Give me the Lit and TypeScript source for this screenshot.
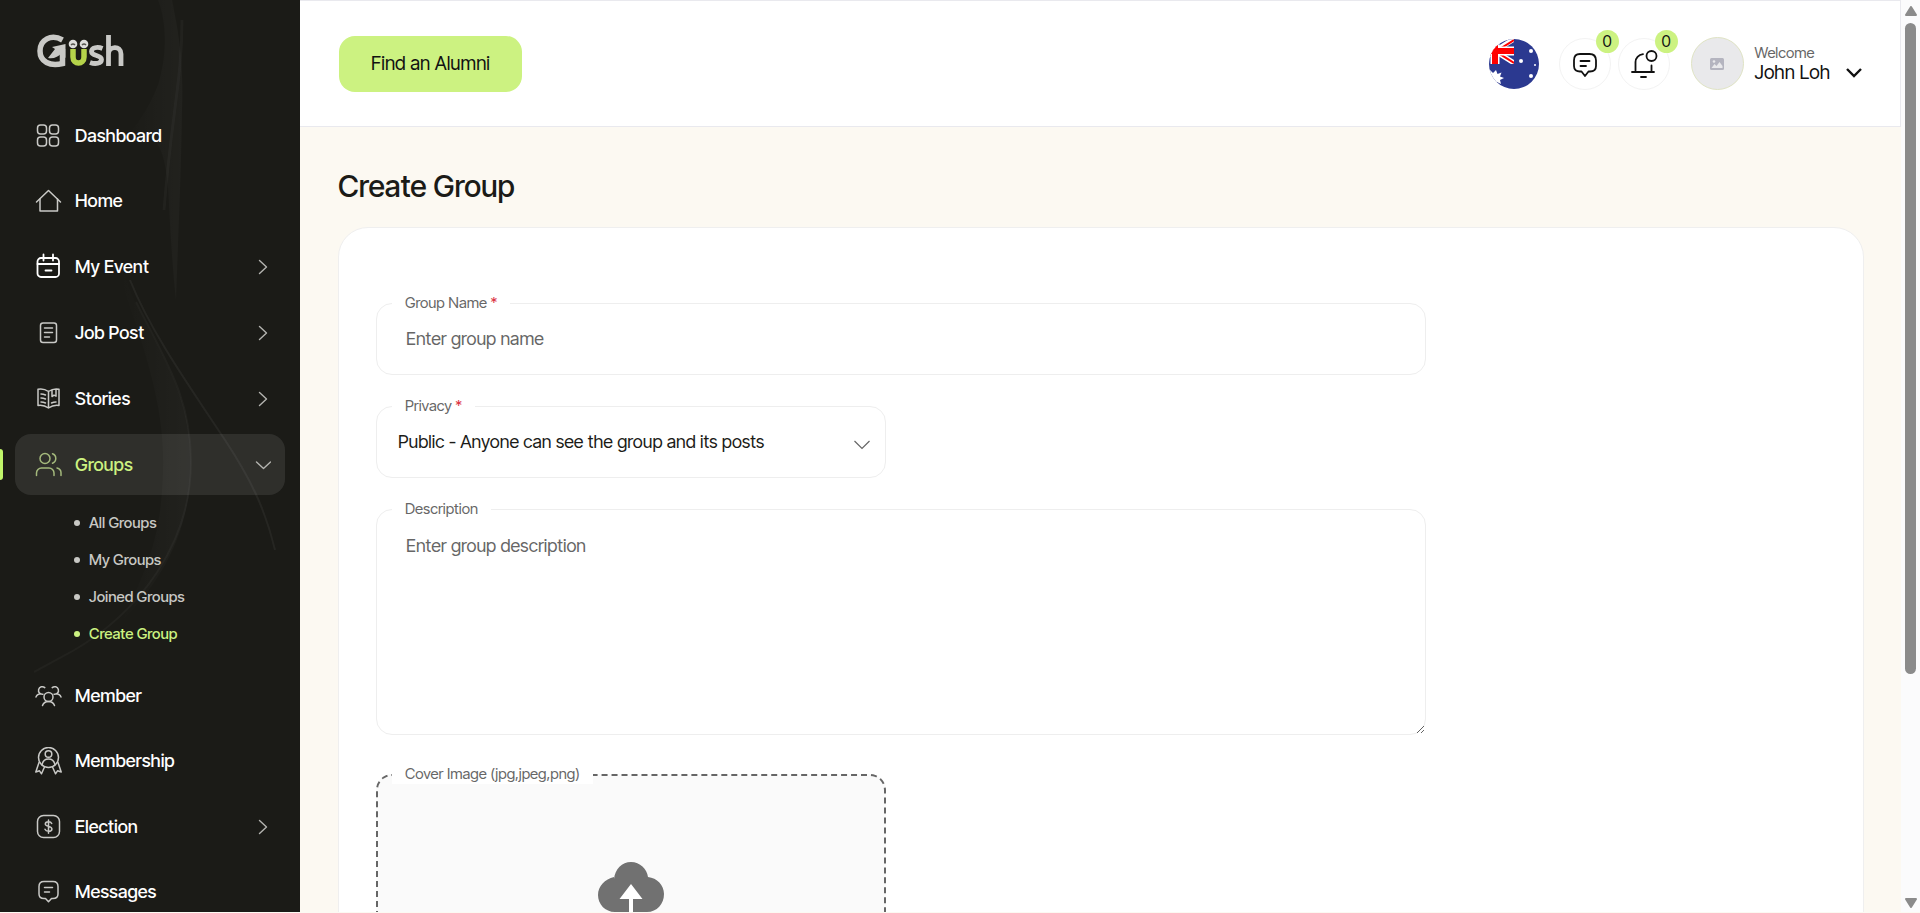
import { LitElement, html, css, svg } from "lit";
import { customElement } from "lit/decorators.js";

const rail = {
  dashboard: svg`<rect x="2.5" y="3" width="9" height="9" rx="3"/><rect x="14.5" y="3" width="9" height="9" rx="3"/><rect x="2.5" y="15" width="9" height="9" rx="3"/><rect x="14.5" y="15" width="9" height="9" rx="3"/>`,
  home: svg`<path d="M1.500 15 13.500 3.500 25.500 15"/><path d="M5 12v12h17.500V12"/>`,
  event: svg`<rect x="2.500" y="5" width="21.500" height="19" rx="3.500" stroke-width="1.800"/><path stroke-width="1.800" d="M2.500 11h21.500M8.500 1.500v6M18 1.500v6M10.500 17.500h6"/>`,
  job: svg`<rect x="5.500" y="4" width="16" height="19.500" rx="2.500"/><path d="M9.500 9h8M9.500 13.500h8M9.500 18h5"/>`,
  book: svg`<path d="M13.500 6.500C10 4 6.500 3.500 3 4.200v16.300c3.500-.5 7 0 10.500 2.500 3.500-2.500 7-3 10.500-2.500V4.200c-3.500-.7-7-.2-10.500 2.300zM13.500 6.500V23M6 9c1.800 0 3.200.4 4.500 1M6 13c1.800 0 3.200.4 4.500 1M6 17c1.800 0 3.200.4 4.500 1M16.500 18c1.300-.6 2.700-1 4.500-1M17 5v6.500l2-1.300 2 1V4.200"/>`,
  groups: svg`<circle cx="10" cy="7.500" r="5"/><path d="M17.500 2.800a5 5 0 0 1 0 9.400M1.500 24.500V22a5 5 0 0 1 5-5H14a5 5 0 0 1 5 5v2.500M22 17c2.400.6 4 2.400 4 4.700v2.800"/>`,
  member: svg`<circle cx="13.500" cy="15" r="4.500"/><path d="M7.500 23.500c1-2.700 3.200-4 6-4s5 1.300 6 4M8 12.200a3.800 3.800 0 1 1 1.800-6.600M1 15c.8-2 2.500-3.200 5-3.200M19 12.200a3.800 3.800 0 1 0-1.800-6.600M26 15c-.8-2-2.500-3.200-5-3.200"/>`,
  award: svg`<circle cx="13.500" cy="10.500" r="10"/><circle cx="13.500" cy="7" r="3.300"/><path d="M7 18c.6-3.800 3.200-6 6.500-6s5.900 2.200 6.500 6M4 15.500 .8 25l3.700-1.200 2 3 3-6.800M23 15.500l3.200 9.500-3.700-1.200-2 3-3-6.800"/>`,
  election: svg`<rect x="2.500" y="2.500" width="22" height="22" rx="6"/><path d="M16.700 10.500c-.5-1.200-1.600-1.800-3.200-1.800-1.900 0-3.200.9-3.200 2.300 0 3.200 6.600 1.500 6.600 4.900 0 1.500-1.400 2.400-3.400 2.400-1.800 0-3-.7-3.500-2M13.500 7v13.200"/>`,
  message: svg`<path d="M9 3.500h9c3.200 0 5 1.800 5 5v7.500c0 3.200-1.800 4.500-5 4.500h-1.500l-3 3.200-3-3.200H9c-3.200 0-5-1.300-5-4.500V8.500c0-3.200 1.800-5 5-5zM9.500 9.500h8M9.500 14h5"/>`,
};

type Item = { label: string; icon: keyof typeof rail; more?: boolean; open?: boolean; children?: string[] };

const items: Item[] = [
  { label: "Dashboard", icon: "dashboard" },
  { label: "Home", icon: "home" },
  { label: "My Event", icon: "event", more: true },
  { label: "Job Post", icon: "job", more: true },
  { label: "Stories", icon: "book", more: true },
  { label: "Groups", icon: "groups", more: true, open: true, children: ["All Groups", "My Groups", "Joined Groups", "Create Group"] },
  { label: "Member", icon: "member" },
  { label: "Membership", icon: "award" },
  { label: "Election", icon: "election", more: true },
  { label: "Messages", icon: "message" },
];

const shared = css`
  * { box-sizing: border-box; }
  :host { font-family: "Inter Tight", Inter, "Liberation Sans", sans-serif; font-variation-settings: "opsz" 32; }
  a { color: inherit; text-decoration: none; }
  button { font: inherit; color: inherit; border: 0; background: none; padding: 0; cursor: pointer; }
  svg { display: block; }
`;

@customElement("app-sidebar")
class AppSidebar extends LitElement {
  static styles = [shared, css`
    :host { display: block; position: relative; background: #1b1b17; color: #fff; overflow: hidden; }
    .waves { position: absolute; top: 0; left: 0; }
    .logo { position: relative; display: block; padding: 32px 36px 0; height: 106px; }
    .list { position: relative; list-style: none; margin: 0; padding: 0; display: flex; flex-direction: column; gap: 5px; }
    .row { display: flex; align-items: center; gap: 12px; margin: 0 15px; height: 60px; padding: 0 14px 0 20px; border-radius: 16px; font-size: 18px; line-height: 24px; font-weight: 500; }
    .more { height: 61px; }
    .open { background: rgba(255, 255, 255, 0.09); color: #ccf281; }
    .row .icon { color: #c9c9c6; }
    .open .icon { color: #a4b97c; }
    .event .icon { color: #fff; }
    .text { flex: 1; }
    .arrow { color: #b4b4b0; }
    .mark { position: absolute; left: 0; width: 3px; height: 31px; margin-top: 15px; background: #c0f56a; border-radius: 0 3px 3px 0; }
    .sub { list-style: none; margin: 0; padding: 9px 0 9px 74px; font-size: 15px; font-weight: 500; color: #c8c8c4; }
    .sub a { display: flex; align-items: center; gap: 9px; height: 37px; line-height: 20px; }
    .sub a::before { content: ""; width: 6px; height: 6px; border-radius: 50%; background: currentColor; }
    .sub .current { color: #ccf281; }
  `];

  render() {
    return html`
      <svg class="waves" width="300" height="913" viewBox="0 0 300 913" fill="none" stroke="#fff" aria-hidden="true">
        <defs>
          <linearGradient id="fade" x1="0" x2="1"><stop offset="0" stop-color="#fff" stop-opacity="0"/><stop offset="1" stop-color="#fff" stop-opacity=".03"/></linearGradient>
        </defs>
        <path stroke="none" fill="url(#fade)" d="M158 0c10 25 8 60 0 85-12 30-20 35-35 60 25-20 40-10 45 40 2 40 4 80 8 115 2-60 5-120 6-190 2-50-4-80-10-110z"/>
        <path stroke="none" fill="url(#fade)" d="M120 230c0 30 5 50 15 72 32 64 56 98 56 160 0 70-30 120-70 160 30-60 40-90 42-150 2-50-10-100-35-170-8-25-12-50-8-72z"/>
        <path d="M182 20c0 60-10 90-18 190" stroke-opacity=".03" stroke-width="3"/>
        <path d="M130 280c20 50 55 100 95 160 25 38 40 68 50 110" stroke-opacity=".05" stroke-width="2"/>
        <path d="M136 302c30 60 55 95 55 160 0 80-50 150-120 190L34 672" stroke-opacity=".03" stroke-width="2"/>
      </svg>
      <a class="logo" href="#" aria-label="Güsh">
        <svg width="90" height="38" viewBox="0 0 90 38" fill="none" stroke-width="5.500">
          <path stroke="#c9c9c6" d="M26.500 8C15 1.500 4 8 4 19c0 11 10 15.500 22.500 12.500V17"/>
          <path fill="#c9c9c6" d="m12 26 7-9-3-2 13.500-3v14l-4-5c-3 4-8 6-13.500 5z"/>
          <path stroke="#b5d34a" d="M37 17v8c0 8 11 8 11 0v-8"/>
          <path stroke="#c9c9c6" stroke-width="4.800" d="M66.500 16.500c-5-2-11-1-11 3 0 5 10 3 10 8 0 4-6 5-11.500 3M72.500 3v31M72.500 22c0-8 12.500-9 12.500 0v12"/>
          <circle cx="37" cy="12" r="4.300" fill="#ddddda"/><circle cx="48" cy="12" r="4.300" fill="#ddddda"/>
          <path stroke="#55554f" stroke-width="1.500" d="M35 13q2-2 4 0M46 13q2-2 4 0"/>
        </svg>
      </a>
      <nav>
        <ul class="list">
          ${items.map((i) => html`
            <li>
              ${i.open ? html`<span class="mark"></span>` : ""}
              <a href="#" class="row ${i.more ? "more" : ""} ${i.open ? "open" : ""} ${i.icon}">
                <svg class="icon" width="28" height="28" viewBox="0 0 28 28" fill="none" stroke="currentColor" stroke-width="1.500" stroke-linecap="round" stroke-linejoin="round">${rail[i.icon]}</svg>
                <span class="text">${i.label}</span>
                ${i.more ? html`<svg class="arrow" width="16" height="16" viewBox="0 0 16 16" fill="none" stroke="currentColor" stroke-width="1.400" stroke-linecap="round" stroke-linejoin="round"><path d=${i.open ? "m1.500 5 7 6.500 7-6.500" : "m4.500 1.500 7 6.500-7 6.500"}/></svg>` : ""}
              </a>
              ${i.children ? html`<ul class="sub">${i.children.map((c) => html`<li><a href="#" class=${c === "Create Group" ? "current" : ""}>${c}</a></li>`)}</ul>` : ""}
            </li>`)}
        </ul>
      </nav>`;
  }
}

@customElement("app-header")
class AppHeader extends LitElement {
  static styles = [shared, css`
    :host { display: flex; align-items: center; justify-content: space-between; height: 127px; padding: 0 38px 0 39px; background: #fff; border: 1px solid #e9e9ee; border-left: 0; color: #111; }
    .find { background: #ccf281; border-radius: 16px; height: 56px; padding: 0 32px; font-size: 19px; }
    .tools { display: flex; align-items: center; }
    .round { position: relative; width: 52px; height: 52px; border: 1px solid #f3f3f3; border-radius: 50%; display: grid; place-items: center; }
    .msg { margin: 0 7px 0 20px; }
    .badge { position: absolute; top: -9px; right: -9px; width: 23px; height: 23px; border-radius: 50%; background: #ccf281; font-size: 16px; line-height: 23px; text-align: center; }
    .user { display: flex; align-items: center; margin-left: 21px; text-align: left; }
    .avatar { width: 53px; height: 53px; border-radius: 50%; background: #e9e9eb; border: 1px solid #dfe3c4; display: grid; place-items: center; }
    .who { display: grid; margin: 0 16px 0 11px; padding-bottom: 2px; font-size: 19px; line-height: 20px; }
    .hello { font-size: 15px; color: #666; }
    .caret { margin-top: 19px; }
  `];

  render() {
    return html`
      <button class="find">Find an Alumni</button>
      <div class="tools">
        <button aria-label="Australia">
          <svg width="50" height="50" viewBox="0 0 50 50">
            <clipPath id="c"><circle cx="25" cy="25" r="25"/></clipPath>
            <clipPath id="u"><path d="M0 0h25v25H0z"/></clipPath>
            <g clip-path="url(#c)">
              <path fill="#2b3990" d="M0 0h50v50H0z"/>
              <g clip-path="url(#u)">
                <path stroke="#fff" stroke-width="5" d="M-13 0 25 24M25 0-13 24"/>
                <path stroke="#f00" stroke-width="2" d="M25 1-13 25M-13 0 25 24"/>
                <path stroke="#fff" stroke-width="9" d="M6 0v25M0 12h25"/>
                <path stroke="#f00" stroke-width="6" d="M6 0v25M0 12h25"/>
              </g>
              <path fill="#fff" d="m7 31 1.500 4 4-1.500-1.500 4 4 1.500-4 2 1 4-4-2-2 4-2-4-4 1V30l4 4z"/>
              <circle cx="42" cy="12" r="2" fill="#fff"/><circle cx="32" cy="22" r="2" fill="#fff"/><circle cx="46" cy="26" r="1" fill="#fff"/><circle cx="42" cy="37" r="2" fill="#fff"/>
            </g>
          </svg>
        </button>
        <button class="round msg" aria-label="Messages">
          <svg width="28" height="28" viewBox="0 0 28 28" fill="none" stroke="#111" stroke-width="1.800" stroke-linecap="round" stroke-linejoin="round"><path d="M9 4h9.500c4 0 6.500 2 6.500 6.500V16c0 4-2.500 5.500-6 5.500h-1.500L14 26l-3.500-4.500H9C5.500 21.500 3 20 3 16v-5.500C3 6 5 4 9 4zM9.500 11h9M9.500 16H15"/></svg>
          <span class="badge">0</span>
        </button>
        <button class="round" aria-label="Notifications">
          <svg width="28" height="30" viewBox="0 0 28 30" fill="none" stroke="#111" stroke-width="1.800" stroke-linecap="round"><circle cx="21.500" cy="7" r="5"/><path d="M13 5.200C8.500 5.700 5.500 9 5.500 13v8.500M2 23h22M21.500 22v-5.500M11 28h5"/></svg>
          <span class="badge">0</span>
        </button>
        <button class="user">
          <span class="avatar"><svg width="14" height="12" viewBox="0 0 14 12"><rect width="14" height="12" rx="1.500" fill="#b4b4bf"/><path fill="#e9e9eb" d="m1.500 10 3-4 2 2 3-4 3 4v2z"/><circle cx="4" cy="3.500" r="1.300" fill="#e9e9eb"/></svg></span>
          <span class="who"><span class="hello">Welcome</span><span>John Loh</span></span>
          <svg class="caret" width="16" height="12" viewBox="0 0 16 12" fill="none" stroke="#111" stroke-width="2.400"><path d="m1 2 7 7 7-7"/></svg>
        </button>
      </div>`;
  }
}

@customElement("group-form")
class GroupForm extends LitElement {
  static styles = [shared, css`
    :host { display: block; padding: 75px 38px 40px 37px; background: #fff; border: 1px solid #efefef; border-radius: 30px; }
    form { display: grid; grid-template-columns: 1fr 1fr; gap: 31px 30px; max-width: 1050px; }
    .field { position: relative; display: grid; }
    .wide { grid-column: 1 / -1; }
    label, .label { position: absolute; z-index: 1; top: -10px; left: 16px; padding: 0 13px; background: #fff; font-size: 15px; line-height: 20px; color: #666; }
    .req { color: #dc3545; }
    input[type="text"], select, textarea { width: 100%; margin: 0; font: inherit; font-size: 18px; line-height: 27px; color: #1b1b17; background: #fff; border: 1px solid #eee; border-radius: 16px; outline: 0; }
    input[type="text"], select { height: 72px; }
    input[type="text"] { padding: 0 29px 2px; }
    textarea { height: 226px; padding: 22px 29px; display: block; }
    ::placeholder { color: #666; opacity: 1; }
    select { appearance: none; padding: 0 50px 2px 21px; }
    .caret { position: absolute; right: 16px; top: 34px; pointer-events: none; }
    .drop { display: grid; place-items: center; height: 226px; margin-top: 8px; border: 2px dashed #666; border-radius: 16px; background: #fafafa; }
    .cover label { position: static; padding: 0; background: none; cursor: pointer; }
    .cover .label { top: -2px; }
    .file { position: absolute; opacity: 0; width: 1px; height: 1px; }
  `];

  render() {
    return html`
      <form>
        <div class="field wide">
          <label for="name">Group Name <span class="req">*</span></label>
          <input id="name" type="text" placeholder="Enter group name" />
        </div>
        <div class="field">
          <label for="privacy">Privacy <span class="req">*</span></label>
          <select id="privacy"><option>Public - Anyone can see the group and its posts</option></select>
          <svg class="caret" width="16" height="10" viewBox="0 0 16 10" fill="none" stroke="#666" stroke-width="1.200"><path d="m.5 1 7.500 7.500L15.500 1"/></svg>
        </div>
        <div class="field wide">
          <label for="desc">Description</label>
          <textarea id="desc" placeholder="Enter group description"></textarea>
        </div>
        <div class="field cover">
          <label for="cover"><span class="label">Cover Image (jpg,jpeg,png)</span>
            <span class="drop">
              <svg width="66" height="50" viewBox="0 0 66 50"><path fill="#717171" d="M16 17C17 7 24 0 33 0s16 7 17 15c9 1 16 8 16 17 0 10-7 18-17 18H17C7 50 0 42 0 33c0-9 7-16 16-18z"/><path fill="#fff" d="m33 22 11.500 15H35v13h-4V37h-9.500z"/></svg>
            </span>
          </label>
          <input class="file" id="cover" type="file" />
        </div>
      </form>`;
  }
}

@customElement("app-root")
class AppRoot extends LitElement {
  static styles = [shared, css`
    :host { display: grid; grid-template: minmax(0, 1fr) / 300px minmax(0, 1fr) 19px; box-sizing: border-box; height: 100vh; padding-bottom: 1px; overflow: hidden; background: #fcf9f2; }
    .page { overflow: hidden; }
    .body { padding: 38px 37px 40px 38px; }
    h1 { margin: 0 0 20px; font-size: 30px; line-height: 42px; font-weight: 500; color: #1b1b17; }
    .scroll { display: flex; flex-direction: column; align-items: center; background: #fbfbfc; padding: 6px 0 4px; gap: 7px; }
    .rail { flex: 1; width: 11px; }
    .thumb { height: 75%; border-radius: 6px; background: #8b8b8b; }
  `];

  render() {
    return html`
      <app-sidebar></app-sidebar>
      <div class="page">
        <app-header></app-header>
        <main class="body">
          <h1>Create Group</h1>
          <group-form></group-form>
        </main>
      </div>
      <div class="scroll" aria-hidden="true">
        <svg width="12" height="10" viewBox="0 0 12 10"><path fill="#8b8b8b" stroke="#8b8b8b" stroke-linejoin="round" stroke-width="2" d="m6 1 5 8H1z"/></svg>
        <div class="rail"><div class="thumb"></div></div>
        <svg width="12" height="10" viewBox="0 0 12 10"><path fill="#8b8b8b" stroke="#8b8b8b" stroke-linejoin="round" stroke-width="2" d="m6 9 5-8H1z"/></svg>
      </div>`;
  }
}
